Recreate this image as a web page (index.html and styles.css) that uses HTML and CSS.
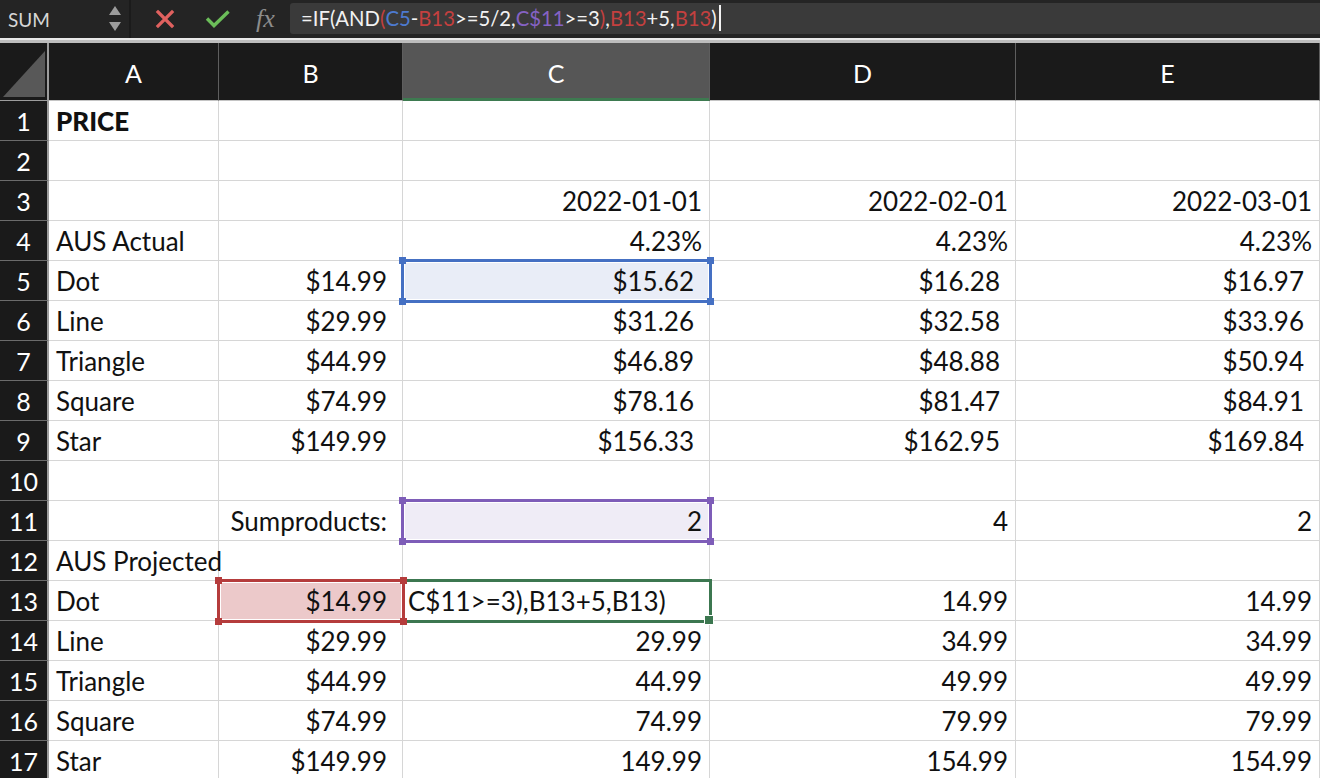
FILE: index.html
```html
<!DOCTYPE html>
<html lang="en">
  <head>
    <meta charset="UTF-8" />
    <meta name="viewport" content="width=device-width, initial-scale=1.0" />
    <title>Sheet1 - Price</title>
    <link rel="stylesheet" href="styles.css">
  </head>
  <body>
    <!-- formula bar -->
    <header class="toolbar">
      <div class="namebox">
        <span class="name">SUM</span>
        <svg class="stepper" width="14" height="28" viewBox="0 0 14 28">
          <path d="M7 1 L13 10 L1 10 Z" fill="#9c9c9c" />
          <path d="M1 17 L13 17 L7 26 Z" fill="#9c9c9c" />
        </svg>
      </div>
      <div class="actions">
        <svg width="20" height="20" viewBox="0 0 20 20">
          <path d="M3 3 L17 17 M17 3 L3 17" stroke="#e0615f" stroke-width="3.2" stroke-linecap="square" />
        </svg>
        <svg width="26" height="20" viewBox="0 0 26 20">
          <path d="M2 9.5 L9 16.5 L23.5 2.5" stroke="#6bbd59" stroke-width="3.4" fill="none" />
        </svg>
        <span class="fx">fx</span>
      </div>
      <div class="formula">
        <span>=IF(AND</span><span class="ref-red">(</span><span class="ref-blue">C5</span><span>-</span><span class="ref-red">B13</span><span>&gt;=5/2,</span><span class="ref-purple">C$11</span><span>&gt;=3</span><span class="ref-red">)</span><span>,</span><span class="ref-red">B13</span><span>+5,</span><span class="ref-red">B13</span><span>)</span><span class="caret"></span>
      </div>
    </header>
    <div class="divider"></div>

    <!-- sheet -->
    <main class="sheet">
      <div class="corner">
        <svg width="44" height="48" viewBox="0 0 44 48"><path d="M43 1 L43 47 L1 47 Z" fill="#585858" /></svg>
      </div>
      <div class="col-head">A</div>
      <div class="col-head">B</div>
      <div class="col-head selected">C</div>
      <div class="col-head">D</div>
      <div class="col-head">E</div>

      <div class="row-head">1</div>
      <div class="cell bold">PRICE</div><div class="cell"></div><div class="cell"></div><div class="cell"></div><div class="cell"></div>

      <div class="row-head">2</div>
      <div class="cell"></div><div class="cell"></div><div class="cell"></div><div class="cell"></div><div class="cell"></div>

      <div class="row-head">3</div>
      <div class="cell"></div><div class="cell"></div><div class="cell num">2022-01-01</div><div class="cell num">2022-02-01</div><div class="cell num">2022-03-01</div>

      <div class="row-head">4</div>
      <div class="cell">AUS Actual</div><div class="cell"></div><div class="cell num">4.23%</div><div class="cell num">4.23%</div><div class="cell num">4.23%</div>

      <div class="row-head">5</div>
      <div class="cell">Dot</div><div class="cell cur">$14.99</div>
      <div class="cell cur fill-blue">$15.62<span class="range blue"><i class="h tl"></i><i class="h tr"></i><i class="h bl"></i><i class="h br"></i></span></div>
      <div class="cell cur">$16.28</div><div class="cell cur">$16.97</div>

      <div class="row-head">6</div>
      <div class="cell">Line</div><div class="cell cur">$29.99</div><div class="cell cur">$31.26</div><div class="cell cur">$32.58</div><div class="cell cur">$33.96</div>

      <div class="row-head">7</div>
      <div class="cell">Triangle</div><div class="cell cur">$44.99</div><div class="cell cur">$46.89</div><div class="cell cur">$48.88</div><div class="cell cur">$50.94</div>

      <div class="row-head">8</div>
      <div class="cell">Square</div><div class="cell cur">$74.99</div><div class="cell cur">$78.16</div><div class="cell cur">$81.47</div><div class="cell cur">$84.91</div>

      <div class="row-head">9</div>
      <div class="cell">Star</div><div class="cell cur">$149.99</div><div class="cell cur">$156.33</div><div class="cell cur">$162.95</div><div class="cell cur">$169.84</div>

      <div class="row-head">10</div>
      <div class="cell"></div><div class="cell"></div><div class="cell"></div><div class="cell"></div><div class="cell"></div>

      <div class="row-head">11</div>
      <div class="cell"></div><div class="cell cur">Sumproducts:</div>
      <div class="cell num fill-purple">2<span class="range purple"><i class="h tl"></i><i class="h tr"></i><i class="h bl"></i><i class="h br"></i></span></div>
      <div class="cell num">4</div><div class="cell num">2</div>

      <div class="row-head">12</div>
      <div class="cell">AUS Projected</div><div class="cell"></div><div class="cell"></div><div class="cell"></div><div class="cell"></div>

      <div class="row-head">13</div>
      <div class="cell">Dot</div>
      <div class="cell cur fill-red">$14.99<span class="range red"><i class="h tl"></i><i class="h tr"></i><i class="h bl"></i><i class="h br"></i></span></div>
      <div class="cell editing">C$11&gt;=3),B13+5,B13)<span class="range green"><i class="h br"></i></span></div>
      <div class="cell num">14.99</div><div class="cell num">14.99</div>

      <div class="row-head">14</div>
      <div class="cell">Line</div><div class="cell cur">$29.99</div><div class="cell num">29.99</div><div class="cell num">34.99</div><div class="cell num">34.99</div>

      <div class="row-head">15</div>
      <div class="cell">Triangle</div><div class="cell cur">$44.99</div><div class="cell num">44.99</div><div class="cell num">49.99</div><div class="cell num">49.99</div>

      <div class="row-head">16</div>
      <div class="cell">Square</div><div class="cell cur">$74.99</div><div class="cell num">74.99</div><div class="cell num">79.99</div><div class="cell num">79.99</div>

      <div class="row-head">17</div>
      <div class="cell">Star</div><div class="cell cur">$149.99</div><div class="cell num">149.99</div><div class="cell num">154.99</div><div class="cell num">154.99</div>
    </main>
  </body>
</html>
```

FILE: styles.css
```css
body {
  margin: 0;
  font-family: Lato, "Open Sans", sans-serif;
  background: #fff;
  overflow: hidden;
}

/* formula bar */
.toolbar {
  display: flex;
  align-items: center;
  height: 38px;
  background: #242424;
}

.namebox {
  display: flex;
  align-items: center;
  justify-content: space-between;
  width: 131px;
  height: 100%;
  box-sizing: border-box;
  padding: 0 7px 0 8px;
  border-right: 2px solid #1b1b1b;
}

.name {
  color: #d6d6d6;
  font-size: 19px;
}

.actions {
  display: flex;
  align-items: center;
  gap: 30px;
  padding-left: 24px;
  width: 159px;
  box-sizing: border-box;
}

.fx {
  color: #8c8c8c;
  font-family: "Liberation Serif", serif;
  font-style: italic;
  font-size: 26px;
  margin-left: -5px;
}

.formula {
  flex: 1;
  display: flex;
  align-items: center;
  height: 31px;
  margin-top: -2px;
  padding-left: 11px;
  background: #3a3a3a;
  border-radius: 3px 0 0 3px;
  color: #f2f2f2;
  font-size: 20.3px;
  white-space: pre;
}

.ref-blue { color: #4d7ad0; }
.ref-red { color: #c4403f; }
.ref-purple { color: #8562c4; }

.caret {
  width: 2px;
  height: 26px;
  margin-left: 2px;
  background: #f2f2f2;
}

.divider {
  height: 5px;
  background: #bdbdbd;
  border-top: 2px solid #e9e9e9;
  box-sizing: border-box;
}

/* sheet grid */
.sheet {
  display: grid;
  grid-template-columns: 49px 170px 184px 307px 306px 1fr;
  grid-template-rows: 58px;
  grid-auto-rows: 40px;
  font-size: 26px;
  color: #111;
}

.corner,
.col-head,
.row-head {
  background: #1a1a1a;
  color: #fff;
  box-sizing: border-box;
  display: flex;
  align-items: center;
  justify-content: center;
  font-size: 25px;
}

.corner {
  align-items: flex-end;
  justify-content: flex-end;
  padding: 0 1px 2px 0;
  border-right: 2px solid #9d9d9d;
  border-bottom: 1px solid #9d9d9d;
}

.col-head {
  border-right: 1px solid #5e5e5e;
  border-bottom: 1px solid #c4c4c4;
  padding-top: 2px;
}

.col-head.selected {
  background: #565656;
  border-bottom-color: #3d7a50;
  box-shadow: inset 0 -2px 0 #3d7a50;
}

.row-head {
  border-right: 2px solid #9d9d9d;
  border-bottom: 1px solid #6b6b6b;
}

.cell {
  position: relative;
  display: flex;
  align-items: center;
  box-sizing: border-box;
  padding: 0 7px;
  border-right: 1px solid #d6d6d6;
  border-bottom: 1px solid #d6d6d6;
  white-space: nowrap;
}

.cell.bold {
  font-weight: 900;
}

.cell.num {
  justify-content: flex-end;
}

.cell.cur {
  justify-content: flex-end;
  padding-right: 15px;
}

.cell.editing {
  padding-left: 5px;
}

.fill-blue { background: #e9edf7; }
.fill-purple { background: #efecf6; }
.fill-red { background: #ecc9ca; }

/* reference ranges drawn over the grid */
.range {
  position: absolute;
  top: -2px;
  left: -2px;
  right: -3px;
  bottom: -3px;
  border: 3px solid;
  box-shadow: inset 0 0 0 1px #fff;
  z-index: 1;
}

.range.blue { border-color: #4570c3; }
.range.purple { border-color: #7e5db8; }
.range.red { border-color: #b53c3c; z-index: 3; }
.range.green { border-color: #3c7750; box-shadow: none; z-index: 2; }

.h {
  position: absolute;
  width: 7px;
  height: 7px;
}

.blue .h { background: #4570c3; }
.purple .h { background: #7e5db8; }
.red .h { background: #b53c3c; }
.green .h {
  background: #3c7750;
  width: 8px;
  height: 8px;
  border: 1px solid #fff;
}

.h.tl { left: -5px; top: -5px; }
.h.tr { right: -5px; top: -5px; }
.h.bl { left: -5px; bottom: -5px; }
.h.br { right: -5px; bottom: -5px; }
```
